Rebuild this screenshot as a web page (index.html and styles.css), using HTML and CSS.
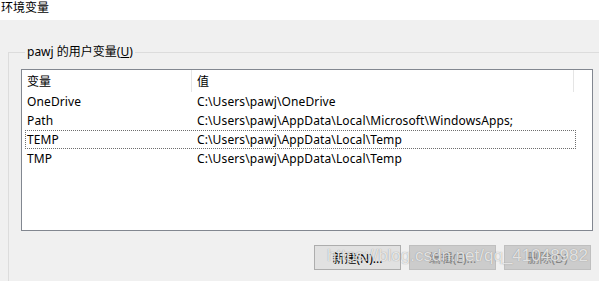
FILE: index.html
```html
<!DOCTYPE html>
<html>
  <head>
    <title>环境变量</title>
    <link rel="stylesheet" href="styles.css">
  </head>
  <body>
    <div class="window">
      <div class="titlebar">环境变量</div>
      <div class="client">
        <fieldset class="group">
          <legend>pawj 的用户变量(<u>U</u>)</legend>
          <div class="listview">
            <div class="lv-header">
              <div class="lv-col lv-name">变量</div>
              <div class="lv-col lv-value">值</div>
            </div>
            <div class="lv-row">
              <span class="cell-name">OneDrive</span>
              <span class="cell-value">C:\Users\pawj\OneDrive</span>
            </div>
            <div class="lv-row">
              <span class="cell-name">Path</span>
              <span class="cell-value">C:\Users\pawj\AppData\Local\Microsoft\WindowsApps;</span>
            </div>
            <div class="lv-row focused">
              <span class="cell-name">TEMP</span>
              <span class="cell-value">C:\Users\pawj\AppData\Local\Temp</span>
            </div>
            <div class="lv-row">
              <span class="cell-name">TMP</span>
              <span class="cell-value">C:\Users\pawj\AppData\Local\Temp</span>
            </div>
          </div>
          <div class="buttons">
            <button class="btn">新建(<u>N</u>)...</button>
            <button class="btn" disabled>编辑(<u>E</u>)...</button>
            <button class="btn" disabled>删除(<u>D</u>)</button>
          </div>
        </fieldset>
        <div class="watermark">https://blog.csdn.net/qq_41048982</div>
      </div>
    </div>
  </body>
</html>
```

FILE: styles.css
```css
body {
  margin: 0;
  font-family: "Noto Sans", "Noto Sans CJK SC", sans-serif;
  font-size: 12px;
  color: #000;
}

.window {
  width: 599px;
  height: 281px;
  overflow: hidden;
  background: #f0f0f0;
}

.titlebar {
  height: 20px;
  line-height: 15px;
  padding-left: 1px;
  background: #fff;
}

.client {
  position: relative;
  height: 261px;
}

.group {
  margin: 0 0 0 8px;
  padding: 0 0 0 12px;
  width: 640px;
  height: 300px;
  border: 1px solid #dcdcdc;
  position: relative;
  top: 24px;
}

.group legend {
  margin-left: 4px;
  padding: 0 2px;
  line-height: 16px;
}

.listview {
  width: 570px;
  height: 160px;
  margin-top: 9px;
  background: #fff;
  border: 1px solid #828790;
}

.lv-header {
  display: flex;
  height: 22px;
}

.lv-col {
  padding: 2px 0 0 5px;
  line-height: 20px;
  border-right: 1px solid #e5e5e5;
}

.lv-name {
  width: 164px;
}

.lv-value {
  width: 376px;
}

.lv-row {
  display: flex;
  width: 548px;
  height: 17px;
  line-height: 17px;
  margin-left: 3px;
  padding-left: 1px;
  border: 1px solid transparent;
  letter-spacing: 0.12px;
}

.lv-row.focused {
  border: 1px dotted #6e6e6e;
}

.cell-name {
  width: 170px;
}

.buttons {
  display: flex;
  justify-content: flex-end;
  gap: 8px;
  width: 570px;
  margin-top: 14px;
}

.btn {
  width: 87px;
  height: 25px;
  font-family: inherit;
  font-size: 12px;
  color: #000;
  background: #e1e1e1;
  border: 1px solid #adadad;
  padding: 0;
}

.btn u {
  text-decoration: none;
}

.btn:disabled {
  background: #cccccc;
  border-color: #bfbfbf;
  color: #838383;
}

.watermark {
  position: absolute;
  right: 11px;
  top: 226px;
  font-family: "Liberation Sans", sans-serif;
  font-size: 17px;
  color: rgba(255, 255, 255, 0.75);
  text-shadow: 0 0 1px rgba(80, 80, 80, 0.6);
}
```
